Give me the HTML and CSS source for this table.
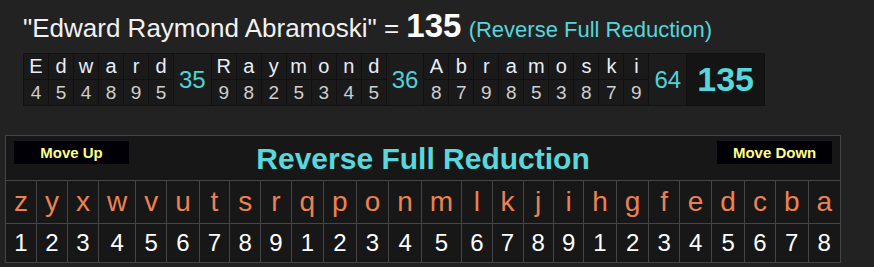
FILE: index.html
```html
<!DOCTYPE html>
<html lang="en">
<head>
<meta charset="utf-8">
<title>Reverse Full Reduction</title>
<link rel="stylesheet" href="styles.css">
</head>
<body>
<div class="page">
  <div class="headline"><span class="phrase">"Edward Raymond Abramoski" = </span><span class="total">135</span> <span class="cipher">(Reverse Full Reduction)</span></div>

  <table class="breakdown">
    <tr class="b-letters">
      <td>E</td><td>d</td><td>w</td><td>a</td><td>r</td><td>d</td>
      <td class="sum" rowspan="2">35</td>
      <td>R</td><td>a</td><td>y</td><td>m</td><td>o</td><td>n</td><td>d</td>
      <td class="sum" rowspan="2">36</td>
      <td>A</td><td>b</td><td>r</td><td>a</td><td>m</td><td>o</td><td>s</td><td>k</td><td>i</td>
      <td class="sum" rowspan="2">64</td>
      <td class="grand" rowspan="2">135</td>
    </tr>
    <tr class="b-values">
      <td>4</td><td>5</td><td>4</td><td>8</td><td>9</td><td>5</td>
      <td>9</td><td>8</td><td>2</td><td>5</td><td>3</td><td>4</td><td>5</td>
      <td>8</td><td>7</td><td>9</td><td>8</td><td>5</td><td>3</td><td>8</td><td>7</td><td>9</td>
    </tr>
  </table>

  <table class="chart">
    <tr class="c-head">
      <td colspan="26">
        <div class="head-bar">
          <button class="move">Move Up</button>
          <span class="chart-title">Reverse Full Reduction</span>
          <button class="move">Move Down</button>
        </div>
      </td>
    </tr>
    <tr class="c-letters">
      <td>z</td><td>y</td><td>x</td><td>w</td><td>v</td><td>u</td><td>t</td><td>s</td><td>r</td><td>q</td><td>p</td><td>o</td><td>n</td><td>m</td><td>l</td><td>k</td><td>j</td><td>i</td><td>h</td><td>g</td><td>f</td><td>e</td><td>d</td><td>c</td><td>b</td><td>a</td>
    </tr>
    <tr class="c-values">
      <td>1</td><td>2</td><td>3</td><td>4</td><td>5</td><td>6</td><td>7</td><td>8</td><td>9</td><td>1</td><td>2</td><td>3</td><td>4</td><td>5</td><td>6</td><td>7</td><td>8</td><td>9</td><td>1</td><td>2</td><td>3</td><td>4</td><td>5</td><td>6</td><td>7</td><td>8</td>
    </tr>
  </table>
</div>
</body>
</html>
```
FILE: styles.css
```css
html, body {
  margin: 0;
  padding: 0;
  background: #222222;
  font-family: "Liberation Sans", Arial, sans-serif;
}

.page {
  padding-top: 10px;
}

.headline {
  height: 32px;
  line-height: 32px;
  padding-left: 23px;
  white-space: nowrap;
  color: #f2f2f2;
  font-size: 26px;
}

.total {
  font-weight: bold;
  font-size: 33px;
  color: #ffffff;
}

.cipher {
  font-size: 22px;
  color: #55d6dc;
}

.breakdown {
  margin: 11px 0 0 23px;
  border-collapse: collapse;
  border: 1px solid #111111;
  background: #1a1a1a;
}

.breakdown td {
  border: 1px solid #111111;
  padding: 0;
  text-align: center;
  vertical-align: middle;
}

.b-letters td {
  width: 24px;
  height: 25px;
  font-size: 20px;
  color: #e8eef8;
}

.b-values td {
  height: 25px;
  font-size: 19px;
  color: #cfcfcf;
}

.breakdown td.sum {
  width: auto;
  padding: 0 5px;
  font-size: 24px;
  color: #4fd3d8;
  background: #1c1c1c;
}

.breakdown td.grand {
  width: 77px;
  font-size: 34px;
  font-weight: bold;
  color: #55d8dc;
  background: #141414;
}

.chart {
  margin: 29px 0 0 5px;
  width: 836px;
  border-collapse: collapse;
  border: 1px solid #454545;
  background: #171717;
}

.chart td {
  border: 1px solid #454545;
  padding: 0 8px;
  text-align: center;
  vertical-align: middle;
}

.c-head td {
  height: 44px;
  padding: 0;
  vertical-align: top;
}

.head-bar {
  display: flex;
  justify-content: space-between;
  align-items: flex-start;
  padding: 5px 8px 0 8px;
  height: 39px;
}

.move {
  width: 115px;
  height: 23px;
  margin: 0;
  padding: 0;
  border: none;
  background: #000006;
  color: #ffff88;
  font-family: "Liberation Sans", Arial, sans-serif;
  font-weight: bold;
  font-size: 15px;
}

.chart-title {
  align-self: center;
  margin-top: -4px;
  font-size: 30px;
  font-weight: bold;
  color: #5ad7dc;
}

.c-letters td {
  height: 42px;
  font-size: 28px;
  color: #ee8150;
}

.c-values td {
  height: 38px;
  font-size: 24px;
  color: #ffffff;
}
```
